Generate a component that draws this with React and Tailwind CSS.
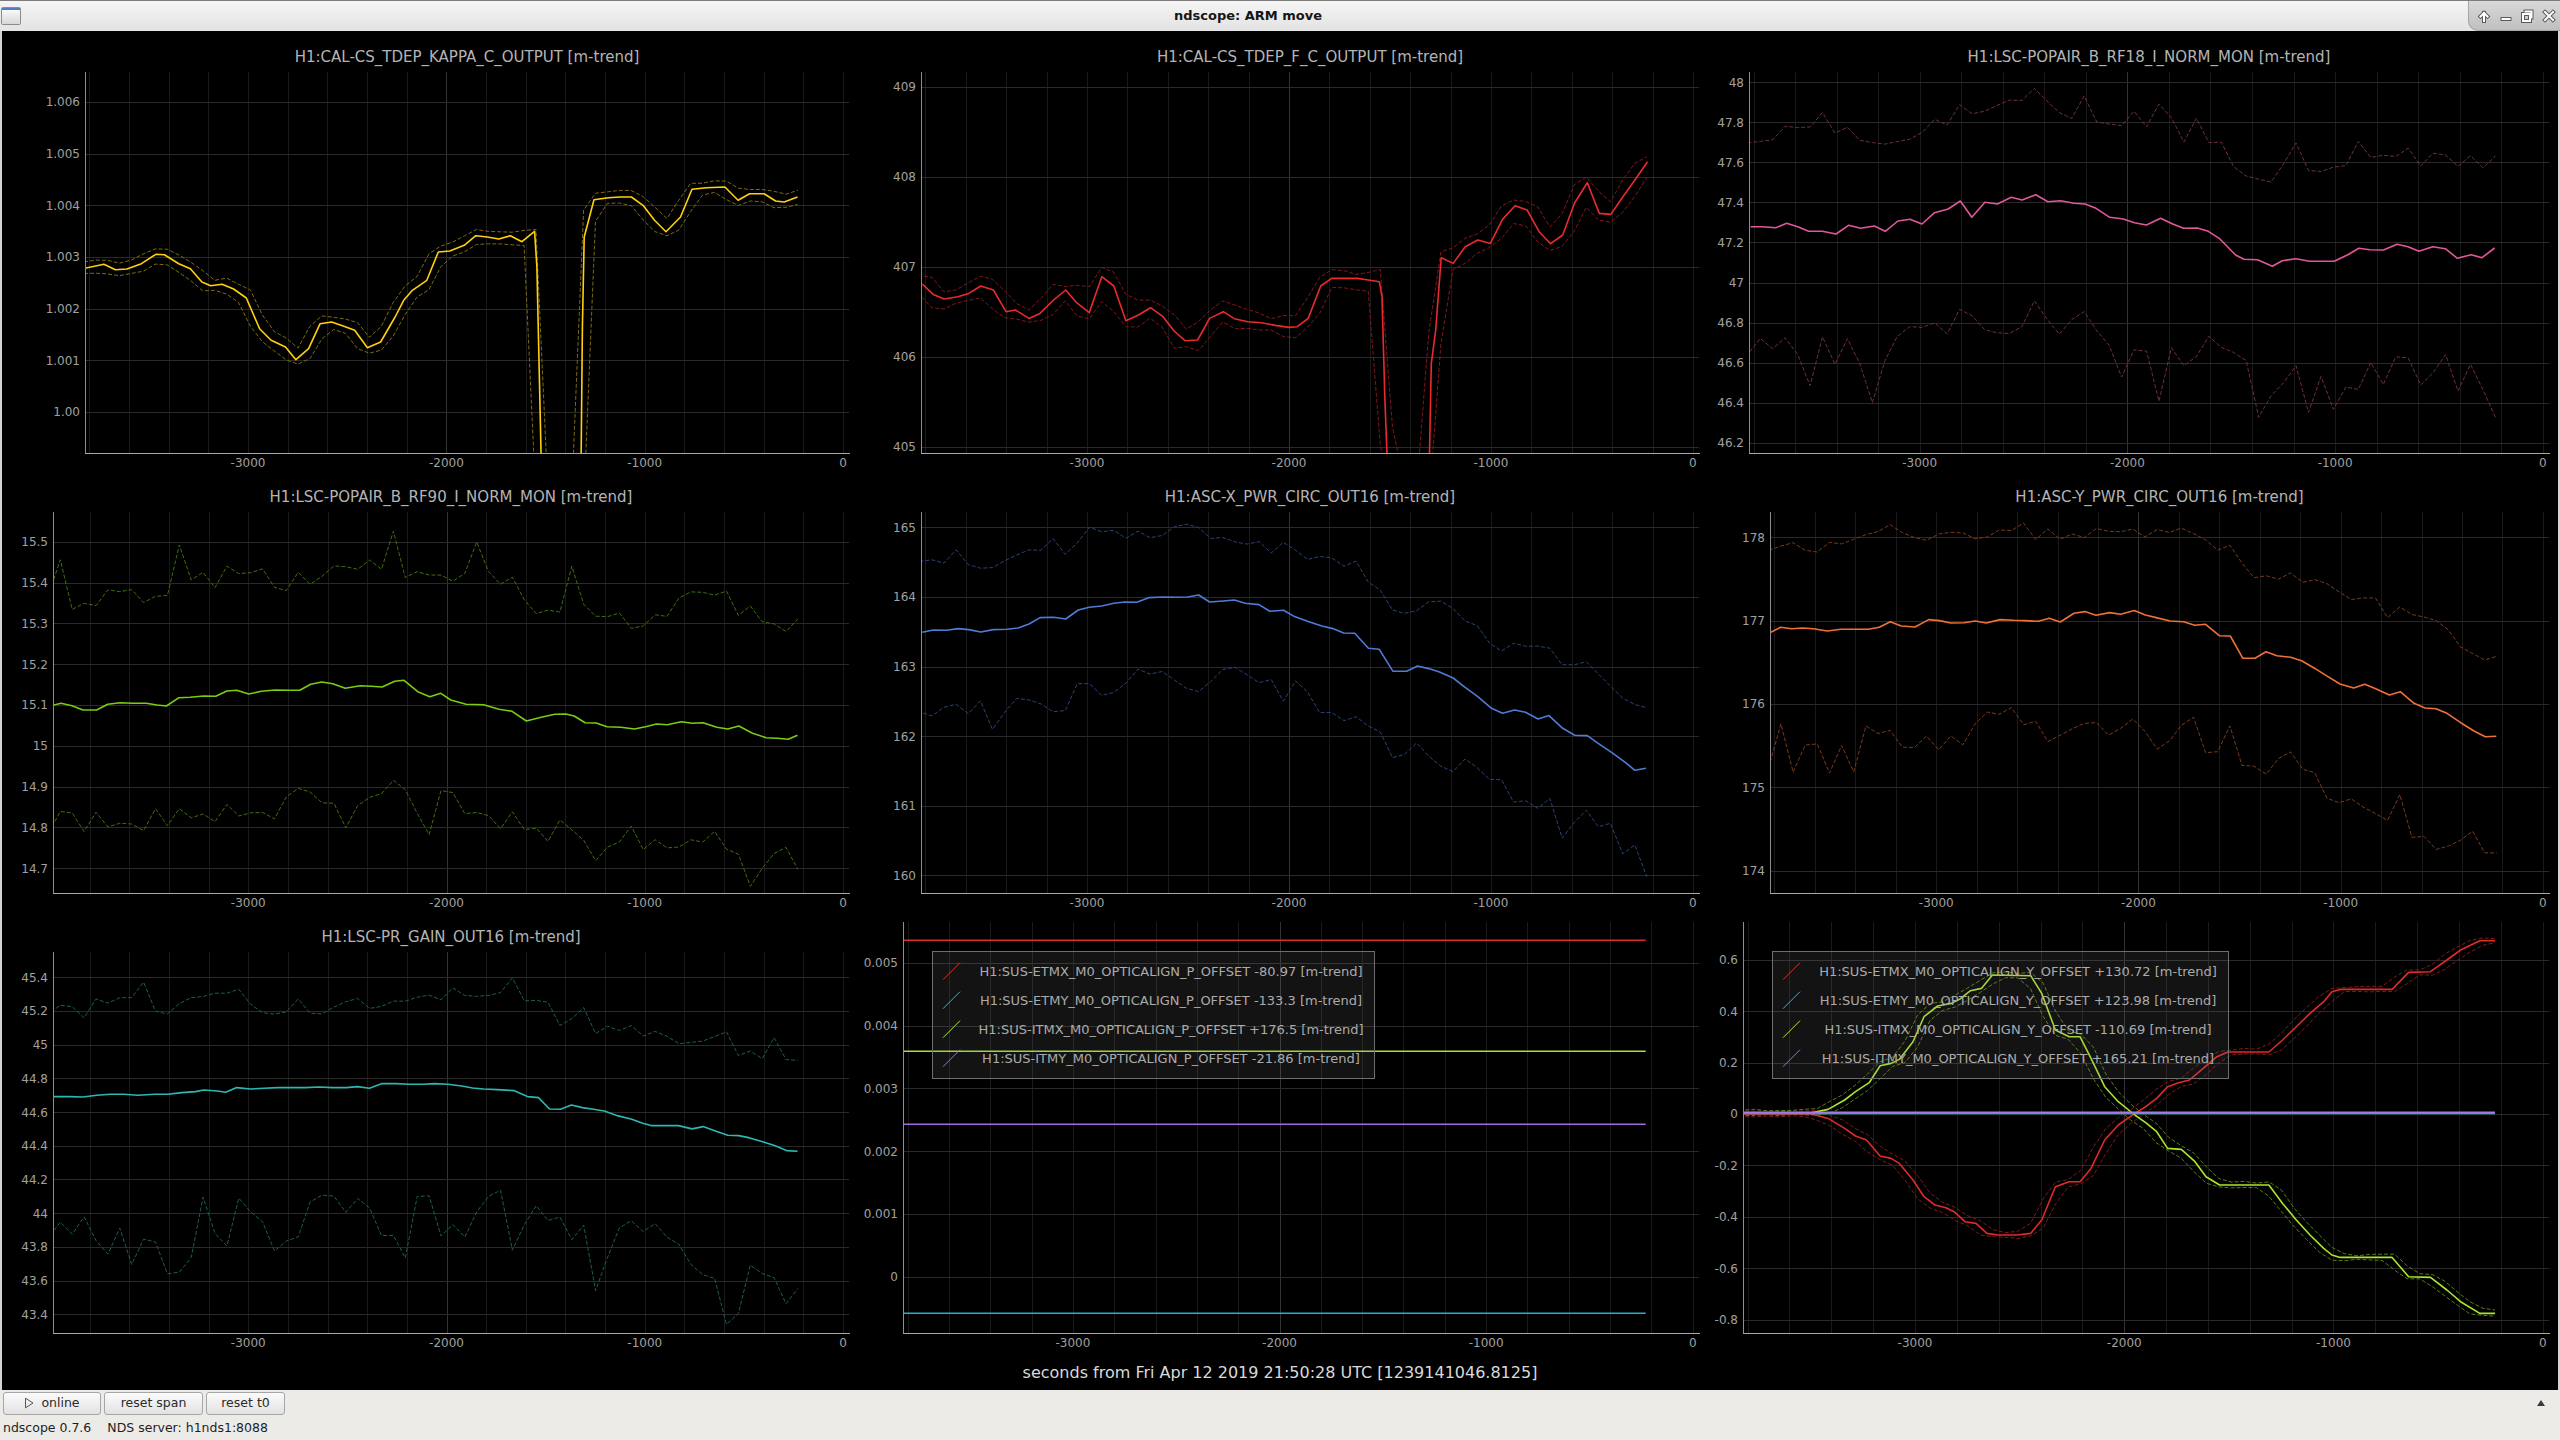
import React from "react";

// ndscope "ARM move" window: 3x3 grid of minute-trend plots

const X_MIN = -3822;
const X_MAX = 30;
const T_END = -228;
const TIMES = Array.from({ length: 65 }, (_, i) => T_END - 60 * (64 - i));

const rng = (seed) => {
    let s = seed;
    return () => {
        s = (s * 16807) % 2147483647;
        return (s - 1) / 2147483646;
    };
};

// points were read off the screen in zoomed pixels, turn them into (t, value)
const z = (pts, zx0, xs, zy0, v0, vs) => pts.map(([zx, zy]) => [(zx - zx0) * xs, v0 - (zy - zy0) * vs]);

const interp = (pts, t) => {
    if (t <= pts[0][0]) return pts[0][1];
    if (t >= pts[pts.length - 1][0]) return pts[pts.length - 1][1];
    for (let i = 1; i < pts.length; i++) {
        if (t <= pts[i][0]) {
            const [t0, v0] = pts[i - 1];
            const [t1, v1] = pts[i];
            return v0 + ((t - t0) / (t1 - t0 || 1)) * (v1 - v0);
        }
    }
    return pts[pts.length - 1][1];
};

// min/max lines that hug the mean
const tight = (main, seed, off, amp) => {
    const r = rng(seed);
    const hi = [];
    const lo = [];
    TIMES.forEach((t) => {
        const a = interp(main, t - 30);
        const b = interp(main, t);
        const c = interp(main, t + 30);
        hi.push([t, Math.max(a, b, c) + off + r() * amp]);
        lo.push([t, Math.min(a, b, c) - off - r() * amp]);
    });
    return [hi, lo];
};

// min/max lines of a noisy channel
const noisy = (main, seed, up, upAmp, upSpike, dn, dnAmp, dnSpike) => {
    const r = rng(seed);
    let a = 0;
    let b = 0;
    const hi = [];
    const lo = [];
    TIMES.forEach((t) => {
        const m = interp(main, t);
        a = 0.5 * a + (r() - 0.5) * 2 * upAmp;
        b = 0.3 * b + (r() - 0.5) * 2 * dnAmp;
        const sa = r() < 0.14 ? upSpike * (0.5 + r() * 0.5) : 0;
        const sb = r() < 0.18 ? dnSpike * (0.5 + r() * 0.5) : 0;
        hi.push([t, m + up + a + sa]);
        lo.push([t, m - dn + b + sb]);
    });
    return [hi, lo];
};

const trend = (main, color, dim, env) => [
    { pts: env[0], color: dim, dash: true },
    { pts: env[1], color: dim, dash: true },
    { pts: main, color },
];

const kappa = z([[148,805],[185,792],[205,808],[225,806],[250,790],[275,762],[290,763],[315,790],[335,805],[355,845],[370,856],[390,852],[410,866],[432,893],[455,985],[475,1020],[500,1040],[518,1078],[540,1045],[560,970],[580,965],[600,977],[620,990],[642,1042],[665,1025],[690,950],[705,900],[720,870],[745,840],[765,755],[785,752],[810,735],[830,706],[850,710],[870,716],[890,706],[910,724],[932,693],[936,800],[945,1500],[1012,1500],[1015,980],[1018,710],[1035,598],[1060,592],[1080,590],[1100,590],[1120,615],[1140,660],[1160,694],[1185,650],[1205,567],[1230,562],[1262,560],[1285,600],[1305,580],[1330,580],[1350,602],[1365,605],[1388,590]], 1467, 2.907, 305, 1.006, 6.452e-6);

const fcc = z([[130,762],[150,793],[170,807],[195,800],[215,790],[237,768],[260,780],[283,845],[300,840],[325,865],[345,850],[370,810],[392,780],[412,818],[435,848],[458,740],[480,768],[502,872],[525,855],[547,833],[570,860],[590,903],[610,932],[633,930],[655,865],[680,845],[700,866],[725,875],[750,878],[775,886],[800,892],[815,890],[835,865],[858,768],[878,745],[925,745],[945,750],[965,755],[970,800],[975,1100],[982,1400],[1055,1400],[1060,1000],[1068,900],[1078,683],[1100,700],[1122,650],[1145,630],[1168,640],[1190,568],[1213,527],[1235,540],[1257,605],[1278,641],[1300,615],[1322,518],[1345,458],[1367,550],[1388,553],[1410,500],[1432,450],[1455,395]], 1538, 2.71, 170, 409, 0.0037037);

const rf18 = z([[89,590],[110,590],[135,593],[155,580],[175,590],[195,604],[220,604],[245,612],[268,586],[290,595],[315,588],[335,604],[358,573],[380,568],[402,582],[425,548],[450,537],[472,513],[493,562],[517,517],[540,522],[565,502],[585,510],[610,494],[632,515],[655,512],[680,520],[700,522],[720,535],[745,562],[770,567],[790,578],[812,585],[838,565],[860,582],[880,595],[905,594],[925,604],[945,625],[975,675],[990,688],[1015,689],[1042,709],[1060,692],[1085,686],[1110,694],[1135,694],[1155,694],[1180,674],[1200,655],[1220,659],[1245,660],[1270,643],[1290,650],[1310,664],[1335,650],[1358,656],[1380,685],[1405,674],[1425,683],[1448,654]], 1536, 2.636, 157, 48, 0.0016651);

const rf90 = z([[97,705],[110,700],[130,707],[150,720],[175,720],[195,703],[218,698],[240,700],[265,700],[285,705],[302,708],[325,683],[345,682],[370,678],[392,679],[412,663],[430,661],[452,672],[475,664],[500,660],[525,661],[545,661],[565,643],[585,636],[605,641],[628,655],[655,647],[675,649],[695,651],[718,634],[735,631],[760,665],[782,680],[802,670],[820,690],[848,703],[880,704],[908,718],[932,724],[958,753],[985,742],[1010,733],[1030,732],[1045,738],[1065,758],[1085,759],[1105,770],[1130,772],[1155,777],[1175,770],[1195,762],[1215,764],[1240,755],[1260,760],[1280,758],[1305,772],[1325,777],[1345,768],[1370,790],[1395,803],[1415,805],[1435,808],[1452,796]], 1535, 2.768, 215, 15.5, 0.0008163);

const xpwr = z([[130,487],[150,480],[175,481],[195,476],[215,479],[237,486],[260,479],[285,478],[305,474],[325,462],[345,443],[370,442],[392,447],[415,420],[435,412],[458,408],[480,400],[500,396],[522,397],[545,383],[570,381],[595,382],[615,381],[635,375],[655,396],[680,393],[700,390],[720,400],[745,404],[765,424],[790,421],[810,440],[835,455],[860,468],[880,476],[900,489],[920,490],[945,535],[965,538],[990,604],[1015,604],[1035,588],[1055,596],[1075,606],[1100,624],[1120,650],[1145,680],[1170,715],[1190,730],[1212,720],[1232,727],[1255,747],[1275,737],[1300,775],[1322,796],[1345,797],[1365,820],[1390,848],[1415,878],[1432,901],[1452,895]], 1538, 2.71, 172, 165, 0.004789);

const ypwr = z([[127,487],[145,472],[165,476],[185,474],[205,476],[230,483],[255,478],[280,478],[305,478],[325,472],[345,455],[365,468],[390,471],[415,449],[435,452],[455,459],[480,458],[500,453],[520,459],[545,449],[570,451],[590,452],[615,454],[635,445],[655,456],[680,430],[700,425],[720,436],[745,428],[765,433],[790,422],[810,435],[830,443],[855,453],[880,455],[900,466],[920,463],[945,497],[965,498],[988,565],[1010,565],[1030,545],[1050,557],[1075,562],[1095,572],[1120,596],[1140,617],[1165,642],[1190,654],[1210,643],[1230,656],[1255,675],[1275,665],[1300,700],[1320,714],[1340,716],[1360,730],[1385,758],[1410,784],[1430,800],[1450,799]], 1535, 2.712, 202, 178, 0.004);

const prgain = z([[97,560],[125,560],[150,561],[175,556],[200,553],[225,553],[250,556],[280,553],[305,553],[330,548],[355,545],[370,540],[395,543],[410,547],[430,533],[455,537],[480,535],[505,533],[530,533],[555,533],[580,531],[605,533],[630,533],[650,530],[672,535],[695,521],[720,521],[745,523],[770,523],[790,521],[815,523],[840,528],[860,534],[880,537],[905,539],[935,542],[960,560],[980,563],[1000,597],[1020,598],[1040,585],[1060,593],[1080,598],[1100,603],[1125,618],[1150,628],[1170,640],[1185,647],[1210,647],[1235,647],[1260,657],[1280,650],[1305,665],[1325,676],[1345,677],[1365,684],[1390,696],[1410,707],[1432,722],[1452,724]], 1535, 2.768, 202, 45.4, 0.001978);

const etmxY = z([[70,612],[200,612],[230,625],[260,655],[280,678],[300,690],[325,738],[345,745],[360,760],[385,810],[405,860],[425,885],[445,893],[460,905],[480,935],[500,940],[520,970],[540,975],[575,975],[600,970],[620,930],[645,830],[670,815],[690,815],[710,775],[735,690],[760,645],[790,610],[810,590],[830,565],[850,530],[870,518],[890,510],[915,475],[940,440],[960,426],[1035,426],[1060,390],[1085,350],[1110,310],[1135,275],[1150,245],[1165,238],[1260,238],[1290,187],[1330,185],[1360,150],[1385,120],[1420,92],[1448,92]], 1535, 2.617, 149, 0.6, 0.0012963);

const itmxY = z([[70,608],[200,608],[230,598],[260,570],[280,545],[305,518],[325,467],[345,460],[360,448],[385,395],[405,320],[430,288],[455,280],[470,268],[490,242],[510,235],[530,195],[600,197],[620,250],[645,360],[670,380],[690,380],[710,445],[735,530],[760,575],[790,615],[810,638],[830,665],[850,715],[875,718],[900,755],[920,800],[945,825],[1035,825],[1060,880],[1085,930],[1110,975],[1135,1015],[1150,1035],[1165,1042],[1260,1042],[1290,1100],[1330,1102],[1360,1140],[1385,1175],[1420,1210],[1448,1210]], 1535, 2.617, 149, 0.6, 0.0012963);

const flat = (v) => [[X_MIN - 10, v], [T_END, v]];

const PANELS = [
    {
        id: "kappa", w: 848, left: 83, title: "H1:CAL-CS_TDEP_KAPPA_C_OUTPUT [m-trend]",
        ya: [1.006, 71, 1.0, 381],
        ticks: ["1.006", "1.005", "1.004", "1.003", "1.002", "1.001", "1.00"],
        series: trend(kappa, "#ffd10a", "#7d6a12", tight(kappa, 11, 0.00008, 0.00005)),
    },
    {
        id: "fcc", w: 850, left: 71, title: "H1:CAL-CS_TDEP_F_C_OUTPUT [m-trend]",
        ya: [409, 55.7, 405, 415.7],
        ticks: ["409", "408", "407", "406", "405"],
        series: trend(fcc, "#ec2a2e", "#80181c", tight(fcc, 23, 0.04, 0.09)),
    },
    {
        id: "rf18", w: 850, left: 49, title: "H1:LSC-POPAIR_B_RF18_I_NORM_MON [m-trend]",
        ya: [48, 51.3, 46.2, 411.7],
        ticks: ["48", "47.8", "47.6", "47.4", "47.2", "47", "46.8", "46.6", "46.4", "46.2"],
        series: trend(rf18, "#e0579b", "#6f2c50", noisy(rf18, 37, 0.45, 0.05, 0.1, 0.6, 0.09, -0.28)),
    },
    {
        id: "rf90", w: 848, left: 51, xmin: -3985, title: "H1:LSC-POPAIR_B_RF90_I_NORM_MON [m-trend]",
        ya: [15.5, 70.7, 14.7, 397.3],
        ticks: ["15.5", "15.4", "15.3", "15.2", "15.1", "15", "14.9", "14.8", "14.7"],
        series: trend(rf90, "#7acc10", "#416e0e", noisy(rf90, 53, 0.28, 0.04, 0.1, 0.27, 0.04, -0.07)),
    },
    {
        id: "xpwr", w: 850, left: 71, title: "H1:ASC-X_PWR_CIRC_OUT16 [m-trend]",
        ya: [165, 56.3, 160, 404.3],
        ticks: ["165", "164", "163", "162", "161", "160"],
        series: trend(xpwr, "#4f7bd8", "#2d4276", noisy(xpwr, 71, 0.95, 0.1, 0.15, 1.15, 0.2, -0.35)),
    },
    {
        id: "ypwr", w: 850, left: 70, title: "H1:ASC-Y_PWR_CIRC_OUT16 [m-trend]",
        ya: [178, 66.3, 174, 399.7],
        ticks: ["178", "177", "176", "175", "174"],
        series: trend(ypwr, "#f0703a", "#7a3a1e", noisy(ypwr, 89, 1.0, 0.1, 0.15, 1.25, 0.22, -0.4)),
    },
    {
        id: "prgain", w: 848, left: 51, xmin: -3985, title: "H1:LSC-PR_GAIN_OUT16 [m-trend]",
        ya: [45.4, 66.3, 43.4, 403.3],
        ticks: ["45.4", "45.2", "45", "44.8", "44.6", "44.4", "44.2", "44", "43.8", "43.6", "43.4"],
        series: trend(prgain, "#2cb8b0", "#1c5e5a", noisy(prgain, 97, 0.5, 0.06, 0.14, 0.78, 0.16, -0.25)),
    },
    {
        id: "pofs", w: 850, left: 53, title: null,
        ya: [0.005, 51.7, 0, 365.7],
        ticks: ["0.005", "0.004", "0.003", "0.002", "0.001", "0"],
        series: [
            { pts: flat(0.005357), color: "#dc2b2b" },
            { pts: flat(-0.000583), color: "#27aecb" },
            { pts: flat(0.003589), color: "#a4e03a" },
            { pts: flat(0.002427), color: "#a06ae0" },
        ],
        legend: {
            x: 82, w: 442, cx: 321,
            items: [
                ["H1:SUS-ETMX_M0_OPTICALIGN_P_OFFSET -80.97 [m-trend]", "#e03030"],
                ["H1:SUS-ETMY_M0_OPTICALIGN_P_OFFSET -133.3 [m-trend]", "#2ab8d8"],
                ["H1:SUS-ITMX_M0_OPTICALIGN_P_OFFSET +176.5 [m-trend]", "#b0ea26"],
                ["H1:SUS-ITMY_M0_OPTICALIGN_P_OFFSET -21.86 [m-trend]", "#a070e0"],
            ],
        },
    },
    {
        id: "yofs", w: 850, left: 43, title: null,
        ya: [0.6, 48.7, -0.8, 408.7],
        ticks: ["0.6", "0.4", "0.2", "0", "-0.2", "-0.4", "-0.6", "-0.8"],
        series: [
            ...tight(etmxY, 7, 0.006, 0.008).map((pts) => ({ pts, color: "#7a1c1c", dash: true })),
            ...tight(itmxY, 5, 0.006, 0.008).map((pts) => ({ pts, color: "#5a7c1a", dash: true })),
            { pts: etmxY, color: "#e12a2a" },
            { pts: itmxY, color: "#aae62c" },
            { pts: flat(0.002), color: "#27aecb" },
            { pts: flat(0.0062), color: "#a07ae8" },
        ],
        legend: {
            x: 72, w: 456, cx: 318,
            items: [
                ["H1:SUS-ETMX_M0_OPTICALIGN_Y_OFFSET +130.72 [m-trend]", "#e03030"],
                ["H1:SUS-ETMY_M0_OPTICALIGN_Y_OFFSET +123.98 [m-trend]", "#2ab8d8"],
                ["H1:SUS-ITMX_M0_OPTICALIGN_Y_OFFSET -110.69 [m-trend]", "#b0ea26"],
                ["H1:SUS-ITMY_M0_OPTICALIGN_Y_OFFSET +165.21 [m-trend]", "#a070e0"],
            ],
        },
    },
];

const GRID_T = Array.from({ length: 20 }, (_, i) => -3800 + i * 200);

const Plot = ({ p }) => {
    const W = p.w;
    const L = p.left;
    const R = W - 1;
    const T = p.title ? 41 : 11;
    const B = 422;
    const xmin = p.xmin ?? X_MIN;
    const sx = (t) => L + ((t - xmin) / (X_MAX - xmin)) * (R - L);
    const [v1, y1, v2, y2] = p.ya;
    const sy = (v) => y1 + ((v - v1) / (v2 - v1)) * (y2 - y1);
    const crisp = (n) => Math.round(n) + 0.5;
    const path = (pts) =>
        pts.map(([t, v], i) => `${i ? "L" : "M"}${sx(t).toFixed(1)},${sy(v).toFixed(1)}`).join("");

    return (
        <svg width={W} height={440} className="block" fontFamily="DejaVu Sans, sans-serif">
            <defs>
                <clipPath id={`clip-${p.id}`}>
                    <rect x={L + 1} y={T} width={R - L - 1} height={B - T} />
                </clipPath>
            </defs>

            {p.title ? (
                <text x={(L + R) / 2} y={30.5} textAnchor="middle" fontSize="15" fill="#b4b4b4">
                    {p.title}
                </text>
            ) : null}

            {GRID_T.map((t) => (
                <line key={t} x1={crisp(sx(t))} x2={crisp(sx(t))} y1={T} y2={B}
                    stroke={t === -2000 ? "#333333" : "#1a1a1a"} />
            ))}
            {p.ticks.map((s) => (
                <line key={s} x1={L} x2={R} y1={crisp(sy(+s))} y2={crisp(sy(+s))} stroke="#2a2a2a" />
            ))}

            <g clipPath={`url(#clip-${p.id})`} fill="none" strokeLinejoin="round">
                {p.series.map((s, i) => (
                    <path key={i} d={path(s.pts)} stroke={s.color}
                        strokeWidth={s.dash ? 1 : 1.6} strokeDasharray={s.dash ? "4 2" : undefined} />
                ))}
            </g>

            <line x1={L + 0.5} x2={L + 0.5} y1={T} y2={B} stroke="#8e8e8e" />
            <line x1={L} x2={R + 1} y1={B + 0.5} y2={B + 0.5} stroke="#a8a8a8" />

            {p.ticks.map((s) => (
                <text key={s} x={L - 5} y={sy(+s) + 4.4} textAnchor="end" fontSize="12" fill="#a0a0a0">
                    {s}
                </text>
            ))}
            {[-3000, -2000, -1000, 0].map((t) => (
                <text key={t} x={sx(t)} y={436} textAnchor="middle" fontSize="12" fill="#a0a0a0">
                    {t === 0 ? "0" : String(t)}
                </text>
            ))}

            {p.legend ? (
                <g>
                    <rect x={p.legend.x + 0.5} y={40.5} width={p.legend.w} height={127}
                        fill="#808080" fillOpacity="0.15" stroke="#6e6e6e" />
                    {p.legend.items.map(([label, color], i) => {
                        const c = 60.7 + i * 29;
                        return (
                            <g key={label}>
                                <line x1={p.legend.x + 11} y1={c + 8} x2={p.legend.x + 28} y2={c - 9} stroke={color} />
                                <text x={p.legend.cx} y={c + 4.6} textAnchor="middle" fontSize="13" fill="#ababab">
                                    {label}
                                </text>
                            </g>
                        );
                    })}
                </g>
            ) : null}
        </svg>
    );
};

const WinIcon = () => (
    <svg width="20" height="18" viewBox="0 0 20 18">
        <defs>
            <linearGradient id="wi" x1="0" y1="0" x2="0" y2="1">
                <stop offset="0" stopColor="#ffffff" />
                <stop offset="1" stopColor="#d6d6d6" />
            </linearGradient>
        </defs>
        <rect x="0.5" y="0.5" width="19" height="17" rx="1" fill="url(#wi)" stroke="#8c8c8c" />
        <rect x="1" y="1" width="18" height="2" fill="#4f7cc4" />
    </svg>
);

// embossed white glyph: dark outline under a white stroke
const Emboss = ({ d, w = 14, h = 14 }) => (
    <svg width={w} height={h} viewBox="0 0 14 14" fill="none" strokeLinecap="square">
        <path d={d} stroke="#5a5a5a" strokeWidth="4" />
        <path d={d} stroke="#ffffff" strokeWidth="2" />
    </svg>
);

const Button = ({ children, width }) => (
    <button type="button"
        className={`h-[23px] ${width} rounded-[3px] border border-[#a6a6a6] bg-linear-to-b from-[#fbfbfb] to-[#e2e2e2] text-[12.5px] text-[#2a2a2a] flex items-center justify-center gap-[7px]`}>
        {children}
    </button>
);

export default function App() {
    return (
        <div className="w-[2560px] h-[1440px] flex flex-col overflow-hidden bg-[#edebe8] font-['DejaVu_Sans',sans-serif]">
            {/* window title bar */}
            <div className="h-[31px] shrink-0 flex items-stretch border-t border-[#7c7c7c] bg-linear-to-b from-[#f5f5f5] to-[#e3e3e3]">
                <div className="w-[28px] flex items-center pl-[1px]">
                    <WinIcon />
                </div>
                <div className="flex-1 flex items-center justify-center text-[13px] font-bold text-[#161616]">
                    ndscope: ARM move
                </div>
                <div className="w-[92px] flex items-center justify-around pl-[4px] rounded-bl-[10px] border-l border-b border-[#a4a4a4] bg-linear-to-b from-[#d9d9d9] to-[#bfbfbf]">
                    <Emboss d="M7 12V4M3.5 7.5L7 4l3.5 3.5" />
                    <Emboss d="M3.5 10h7" />
                    <Emboss d="M3 5h7v7H3zM5.5 2.5h6v6" />
                    <Emboss d="M3 3l8 8M11 3l-8 8" />
                </div>
            </div>

            {/* plot area */}
            <div className="h-[1359px] shrink-0 bg-black border-l-2 border-r-2 border-[#d4d4d4] flex flex-col">
                <div className="grid grid-cols-[848px_850px_850px] grid-rows-[440px_440px_440px]">
                    {PANELS.map((p) => (
                        <Plot key={p.id} p={p} />
                    ))}
                </div>
                <div className="flex-1 flex items-center justify-center pt-[4px] text-[16px] text-[#dadada]">
                    seconds from Fri Apr 12 2019 21:50:28 UTC [1239141046.8125]
                </div>
            </div>

            {/* controls */}
            <div className="h-[26px] shrink-0 flex items-center gap-[3px] px-[3px]">
                <Button width="w-[98px]">
                    <svg width="10" height="12" viewBox="0 0 10 12">
                        <path d="M1.5 1.2v9.6L9 6z" fill="none" stroke="#555" strokeWidth="1" />
                    </svg>
                    <span>online</span>
                </Button>
                <Button width="w-[99px]">reset span</Button>
                <Button width="w-[79px]">reset t0</Button>
                <div className="flex-1" />
                <svg width="8" height="6" viewBox="0 0 8 6" className="mr-[12px]">
                    <path d="M0 6L4 0l4 6z" fill="#3a3a3a" />
                </svg>
            </div>

            {/* status bar */}
            <div className="flex-1 flex items-center gap-[16px] px-[3px] text-[12.5px] text-[#1e1e1e]">
                <span>ndscope 0.7.6</span>
                <span>NDS server: h1nds1:8088</span>
            </div>
        </div>
    );
}
